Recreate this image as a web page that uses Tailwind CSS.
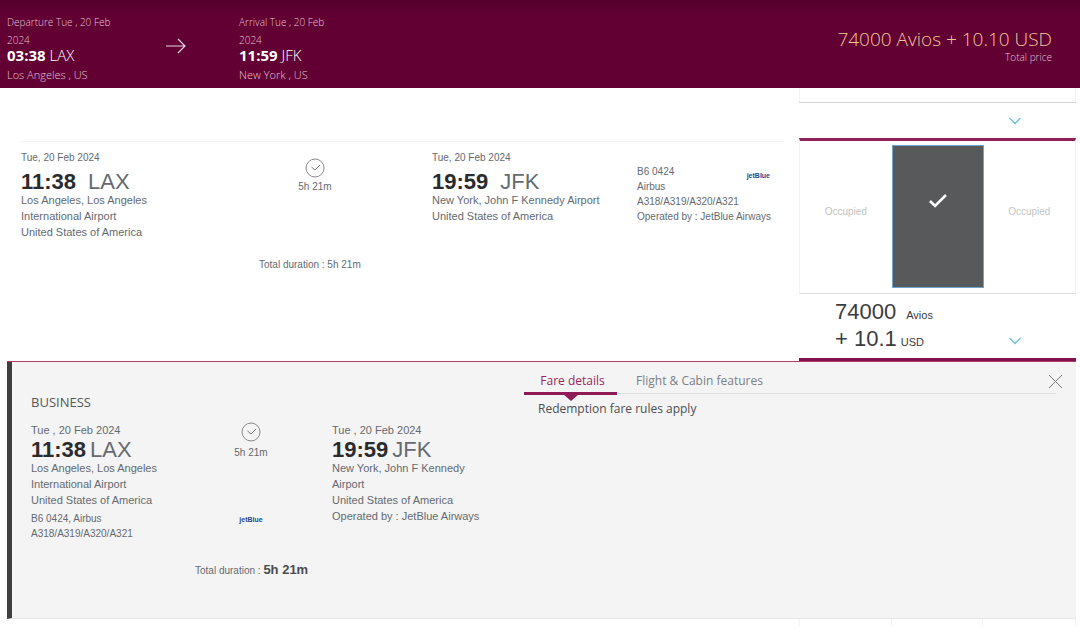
<!DOCTYPE html>
<html lang="en">
<head>
<meta charset="utf-8">
<meta name="viewport" content="width=device-width, initial-scale=1">
<title>Flight selection</title>
<script src="https://cdn.jsdelivr.net/npm/@tailwindcss/browser@4"></script>
</head>
<body class="bg-white font-['Liberation_Sans',sans-serif] text-[11px] leading-4 text-[#646a71]">

<svg class="hidden" aria-hidden="true">
  <symbol id="clock" viewBox="0 0 20 20"><circle cx="10" cy="10" r="9" fill="none" stroke="#8a8a8a"/><path d="M6.500 9l3.500 3 5-5" fill="none" stroke="#777"/></symbol>
  <symbol id="chevron" viewBox="0 0 12 8"><path d="M.5 1L6 6.500 11.500 1" fill="none" stroke="#6cc0dc" stroke-width="1.300"/></symbol>
</svg>

<header class="flex h-[88px] items-start bg-linear-to-b from-[#55002c] to-[#620034] to-20% pt-[13px] pl-[7px] font-['Open_Sans',sans-serif] font-light text-[11px] text-[#e3c3d3]">
  <div class="w-[115px]">
    <p class="text-[10px] leading-[18px]">Departure Tue , 20 Feb<br>2024</p>
    <p class="text-[15px] leading-3 text-white"><b class="font-bold">03:38</b> LAX</p>
    <p class="pt-1 leading-5">Los Angeles , US</p>
  </div>
  <svg class="mt-[25px] ml-11 h-4 w-5" viewBox="0 0 20 16" fill="none" stroke="#ecd3df" stroke-width="1.200" aria-hidden="true"><path d="M0 8h19M12 1l7 7-7 7"/></svg>
  <div class="ml-[53px] w-[100px]">
    <p class="text-[10px] leading-[18px]">Arrival Tue , 20 Feb<br>2024</p>
    <p class="text-[15px] leading-3 text-white"><b class="font-bold">11:59</b> JFK</p>
    <p class="pt-1 leading-5">New York , US</p>
  </div>
  <div class="ml-auto pt-[14px] pr-7 text-right">
    <p class="text-[19px] leading-6 text-[#f3c795]">74000 Avios + 10.10 USD</p>
    <p class="text-[10px] leading-3">Total price</p>
  </div>
</header>

<main>
  <section class="flex pr-1">
    <div class="flex-1 pt-[53px] pl-5">
      <div class="mr-[15px] flex border-t border-[#f4f4f4] pt-2">
        <div class="w-[240px] pl-px">
          <p class="text-[10px]">Tue, 20 Feb 2024</p>
          <p class="flex gap-3 pt-[5px] text-[22px] leading-[21px]"><b class="text-[#2b2b2d]">11:38</b><span>LAX</span></p>
          <p>Los Angeles, Los Angeles<br>International Airport<br>United States of America</p>
        </div>
        <div class="flex w-[110px] flex-col items-center pt-2 text-[10px]">
          <svg class="size-5" aria-hidden="true"><use href="#clock"/></svg>
          <p class="pt-px">5h 21m</p>
        </div>
        <div class="ml-[62px] w-[205px]">
          <p class="text-[10px]">Tue, 20 Feb 2024</p>
          <p class="flex gap-3 pt-[5px] text-[22px] leading-[21px]"><b class="text-[#2b2b2d]">19:59</b><span>JFK</span></p>
          <p>New York, John F Kennedy Airport<br>United States of America</p>
        </div>
        <div class="flex-1 pt-[14px] text-[10px] leading-[15px] whitespace-nowrap">
          <div class="flex justify-between">
            <p>B6 0424<br>Airbus</p>
            <span class="pt-1 pr-[14px] text-[7px] font-bold text-[#1d4a8c]">jetBlue</span>
          </div>
          <p>A318/A319/A320/A321<br>Operated by : JetBlue Airways</p>
        </div>
      </div>
      <p class="pt-[17px] pl-[239px] text-[10px]">Total duration : 5h 21m</p>
    </div>

    <aside class="w-[277px] shrink-0">
      <div class="h-[14px] border-x border-[#f3f3f3]"></div>
      <button type="button" aria-label="Show more fares" class="flex h-9 w-full justify-end border-t border-[#d4d4d4] pt-[14px] pr-[55px]"><svg class="h-2 w-3" aria-hidden="true"><use href="#chevron"/></svg></button>
      <div class="flex h-[156px] border-x border-t-3 border-b border-x-[#f3f3f3] border-t-[#8e2157] border-b-[#dedede] pt-1 pb-[5px] text-center text-[10px] text-[#c2c2c2]">
        <div class="flex flex-1 items-center justify-center pb-[10px]">Occupied</div>
        <button type="button" aria-label="Selected fare" class="flex w-[92px] justify-center border border-[#6fa3d0] bg-[#58595b] pt-12"><svg class="h-[14px] w-[18px]" viewBox="0 0 18 14" fill="none" stroke="#fff" stroke-width="2.600" aria-hidden="true"><path d="M1 7l5 5L17 1"/></svg></button>
        <div class="flex flex-1 items-center justify-center pb-[10px]">Occupied</div>
      </div>
      <div class="flex h-[67px] items-start justify-between border-b-3 border-[#85104f] pt-1 pr-[55px] pl-9 text-[#3c3c3e]">
        <div class="leading-[27px]">
          <p class="flex h-[27px] items-baseline gap-[10px]"><span class="text-[22px]">74000</span><span>Avios</span></p>
          <p class="flex h-[27px] items-baseline gap-1"><span class="text-[22px]">+ 10.1</span><span>USD</span></p>
        </div>
        <button type="button" aria-label="Show fare details" class="mt-[39px]"><svg class="h-2 w-3" aria-hidden="true"><use href="#chevron"/></svg></button>
      </div>
    </aside>
  </section>

  <section class="mr-1 ml-[7px] border-t border-[#b03a63]">
    <div class="flex h-[257px] border-b border-l-[5px] border-b-[#e8e8e8] border-l-[#3f3f40] bg-[#f4f4f4]">
    <div class="w-[512px] pt-8 pl-[19px]">
      <h2 class="font-['Open_Sans',sans-serif] text-[13px] text-[#55575a]">BUSINESS</h2>
      <div class="flex pt-3">
        <div class="w-[165px]">
          <p>Tue , 20 Feb 2024</p>
          <p class="flex gap-1 pt-px text-[22px] leading-[21px]"><b class="text-[#2b2b2d]">11:38</b><span>LAX</span></p>
          <p>Los Angeles, Los Angeles<br>International Airport<br>United States of America</p>
          <p class="pt-[3px] text-[10px] leading-[15px]">B6 0424, Airbus<br>A318/A319/A320/A321</p>
        </div>
        <div class="flex w-[110px] flex-col items-center text-[10px]">
          <svg class="size-5" aria-hidden="true"><use href="#clock"/></svg>
          <p class="pt-[3px]">5h 21m</p>
          <span class="pt-[51px] text-[7px] font-bold text-[#1d4a8c]">jetBlue</span>
        </div>
        <div class="ml-[26px] w-[160px]">
          <p>Tue , 20 Feb 2024</p>
          <p class="flex gap-1 pt-px text-[22px] leading-[21px]"><b class="text-[#2b2b2d]">19:59</b><span>JFK</span></p>
          <p>New York, John F Kennedy<br>Airport<br>United States of America<br>Operated by : JetBlue Airways</p>
        </div>
      </div>
      <p class="pt-[21px] pl-[164px] text-[10px]">Total duration : <b class="text-[13px] text-[#4a4c4f]">5h 21m</b></p>
    </div>

    <div class="flex-1 pr-[13px] font-['Open_Sans',sans-serif]">
      <div class="flex items-start">
        <div class="mr-4 flex h-8 flex-1 items-start border-b border-[#dfdfdf]" role="tablist">
          <button type="button" role="tab" aria-selected="true" class="relative h-[33px] w-[93px] shrink-0 border-b-3 border-[#8e1a56] pt-2 pl-1 text-[12px] text-[#9b1f5c] after:absolute after:top-full after:left-[39px] after:mt-[2px] after:border-x-[8px] after:border-t-[7px] after:border-x-transparent after:border-t-[#8e1a56]">Fare details</button>
          <button type="button" role="tab" aria-selected="false" class="h-[31px] pt-[7px] pl-[19px] text-[12px] text-[#7b7f84]">Flight &amp; Cabin features</button>
        </div>
        <button type="button" aria-label="Close" class="-ml-6 pt-[12px]"><svg class="size-[15px]" viewBox="0 0 15 15" stroke="#777" aria-hidden="true"><path d="M1 1l13 13M14 1L1 14"/></svg></button>
      </div>
      <p class="pt-[7px] pl-[14px] text-[12px] text-[#4c4e51]">Redemption fare rules apply</p>
    </div>
    </div>
  </section>
  <div class="mr-1 ml-auto grid h-2 w-[277px] grid-cols-3 divide-x divide-[#f3f3f3] border-x border-[#f3f3f3]"><i></i><i></i><i></i></div>
</main>
</body>
</html>
